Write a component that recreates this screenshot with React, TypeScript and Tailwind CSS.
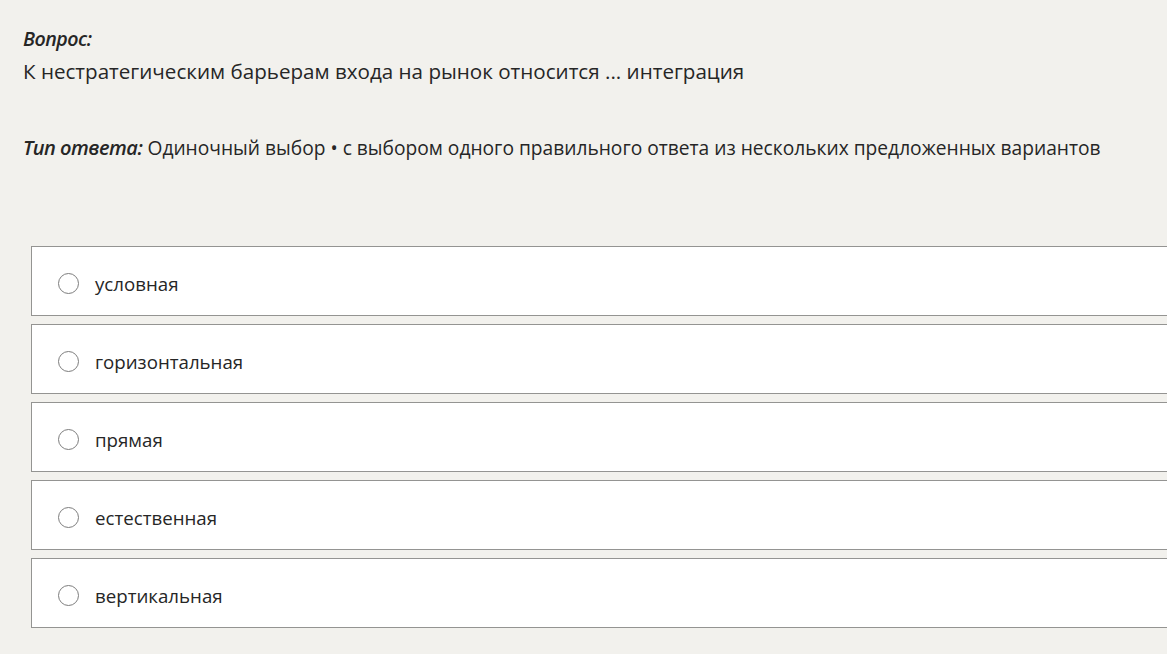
const options = ["условная", "горизонтальная", "прямая", "естественная", "вертикальная"]

export default function App() {
  return (
    <div
      className="min-h-[654px] w-full overflow-hidden bg-[#f2f1ed] text-[#262626]"
      style={{ fontFamily: '"Open Sans", "Noto Sans", sans-serif' }}
    >
      <div className="pl-[23px] pt-[26px]">
        <div className="text-[19.6px] font-semibold italic leading-[26px] tracking-[-0.5px]">Вопрос:</div>
        <div className="mt-[5px] text-[20.6px] leading-[28px]">
          К нестратегическим барьерам входа на рынок относится ... интеграция
        </div>
        <div className="mt-[49px] text-[20px] leading-[28px]">
          <span className="font-semibold italic tracking-[-0.5px]">Тип ответа:</span>{" "}
          <span className="text-[19.2px]">
            Одиночный выбор • с выбором одного правильного ответа из нескольких предложенных вариантов
          </span>
        </div>
      </div>

      <div className="mt-[84px] ml-[31px] mr-[-10px] flex flex-col gap-[8px]">
        {options.map((o) => (
          <label
            key={o}
            className="flex h-[70px] items-center border border-[#949492] bg-white pl-[26px] pt-[5px]"
          >
            <span className="h-[21px] w-[21px] rounded-full border-[1.5px] border-[#7d7d7d] bg-white" />
            <span className="ml-[16px] text-[18.7px] leading-[28px]">{o}</span>
          </label>
        ))}
      </div>
    </div>
  )
}
